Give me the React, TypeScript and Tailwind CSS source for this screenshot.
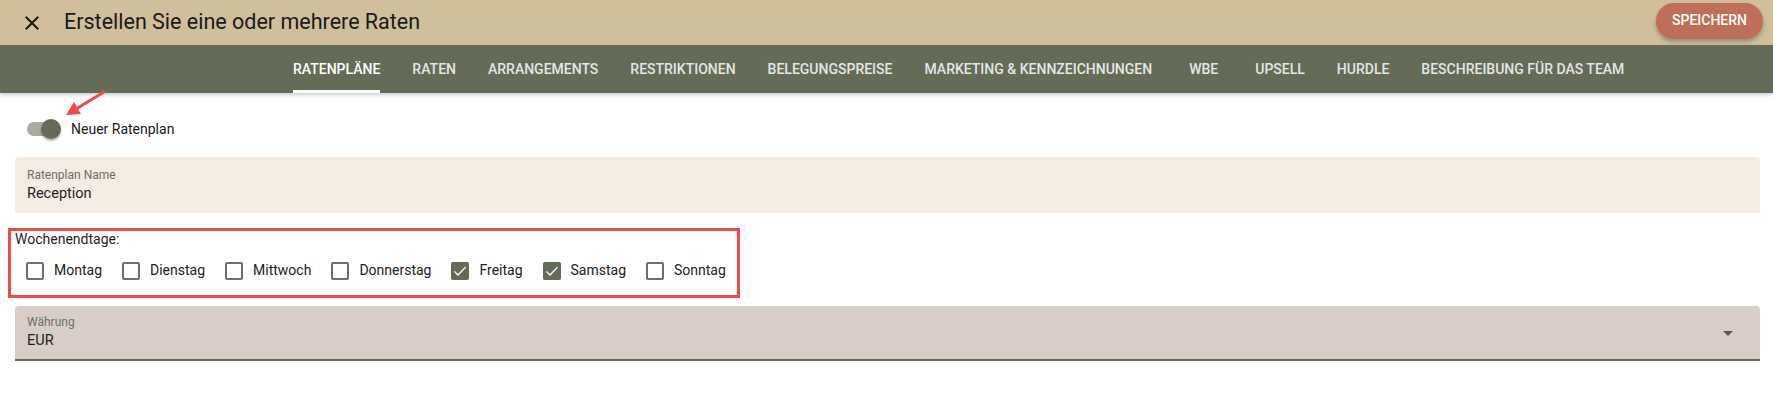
import { useState } from "react";

const TABS = [
  "Ratenpläne",
  "Raten",
  "Arrangements",
  "Restriktionen",
  "Belegungspreise",
  "Marketing & Kennzeichnungen",
  "WBE",
  "Upsell",
  "Hurdle",
  "Beschreibung für das Team",
];

const TAGE = [
  "Montag",
  "Dienstag",
  "Mittwoch",
  "Donnerstag",
  "Freitag",
  "Samstag",
  "Sonntag",
];

function Kontrollkaestchen({
  label,
  checked,
  onChange,
}: {
  label: string;
  checked: boolean;
  onChange: () => void;
}) {
  return (
    <label className="flex items-center cursor-pointer" onClick={onChange}>
      <span
        className={
          checked
            ? "flex h-[18px] w-[18px] items-center justify-center rounded-[2px] bg-[#646b56]"
            : "h-[18px] w-[18px] rounded-[2px] border-2 border-[#6e6e6e]"
        }
      >
        {checked && (
          <svg viewBox="0 0 24 24" className="h-[18px] w-[18px]">
            <path
              d="M4.5 12.5l4.8 4.8L19.5 6.8"
              fill="none"
              stroke="white"
              strokeWidth="1.8"
            />
          </svg>
        )}
      </span>
      <span className="ml-[10px] text-[14px] text-[#222]">{label}</span>
    </label>
  );
}

export default function App() {
  const [aktiv, setAktiv] = useState(true);
  const [tage, setTage] = useState<string[]>(["Freitag", "Samstag"]);

  const umschalten = (t: string) =>
    setTage((v) => (v.includes(t) ? v.filter((x) => x !== t) : [...v, t]));

  return (
    <div className="relative min-h-[403px] bg-white font-['Roboto',sans-serif]">
      {/* Kopfzeile */}
      <div className="flex h-[45px] items-center bg-[#d0bf9b] pl-[20px] pr-[10px]">
        <svg viewBox="0 0 24 24" className="h-[24px] w-[24px] fill-[#1a1a1a]">
          <path d="M19 6.41 17.59 5 12 10.59 6.41 5 5 6.41 10.59 12 5 17.59 6.41 19 12 13.41 17.59 19 19 17.59 13.41 12z" />
        </svg>
        <h1 className="ml-[20px] text-[21.5px] text-[#1a1a1a]">
          Erstellen Sie eine oder mehrere Raten
        </h1>
        <button className="mb-[4px] ml-auto h-[36px] rounded-full bg-[#bf6f57] px-[16px] text-[14px] font-medium text-white shadow-[0_3px_4px_rgba(0,0,0,0.25)]">
          SPEICHERN
        </button>
      </div>

      {/* Reiter */}
      <div className="relative z-10 flex h-[48px] gap-[32px] bg-[#646b56] pl-[293px] shadow-[0_2px_4px_rgba(0,0,0,0.2)]">
        {TABS.map((t, i) => (
          <div
            key={t}
            className={
              "relative flex h-full items-center text-[14px] font-medium uppercase " +
              (i === 0 ? "text-white" : "text-[#e4e6e6]") +
              (t === "WBE" ? " px-[5px]" : "")
            }
          >
            {t}
            {i === 0 && (
              <span className="absolute bottom-0 left-0 right-0 h-[3px] bg-white" />
            )}
          </div>
        ))}
      </div>

      {/* Pfeil-Markierung */}
      <svg
        viewBox="0 0 50 32"
        className="absolute left-[60px] top-[88px] z-20 h-[32px] w-[50px]"
      >
        <line
          x1="44"
          y1="4"
          x2="16"
          y2="21"
          stroke="#f2494a"
          strokeWidth="3"
          strokeLinecap="round"
        />
        <polygon points="6,27 21,26 14,14" fill="#f2494a" />
      </svg>

      <div className="pl-[15px] pr-[13px]">
        {/* Schalter */}
        <div className="mt-[17px] flex h-[38px] items-center pl-[12px]">
          <button
            onClick={() => setAktiv(!aktiv)}
            className="relative h-[14px] w-[31px] rounded-full bg-[#a9ac9f]"
          >
            <span
              className={
                "absolute top-[-3px] h-[20px] w-[20px] rounded-full bg-[#646b56] shadow-[0_2px_2px_rgba(0,0,0,0.3)] " +
                (aktiv ? "right-[-3px]" : "left-[-3px]")
              }
            />
          </button>
          <span className="ml-[13px] text-[14px] text-[#1a1a1a]">
            Neuer Ratenplan
          </span>
        </div>

        {/* Ratenplan Name */}
        <div className="mt-[9px] flex h-[56px] flex-col justify-center rounded-t-[4px] bg-[#f4ebe2] px-[12px]">
          <span className="text-[12px] leading-[14px] text-[#6b6b6b]">
            Ratenplan Name
          </span>
          <span className="mt-[3px] text-[14.5px] leading-[18px] text-[#1f1f1f]">
            Reception
          </span>
        </div>

        {/* Wochenendtage */}
        <div className="-ml-[7px] mt-[15px] w-fit border-[3px] border-[#f24a4a] pb-[14px] pl-[4px] pr-[11px]">
          <div className="text-[14px] leading-[16px] text-[#1f1f1f]">
            Wochenendtage:
          </div>
          <div className="ml-[11px] mt-[13px] flex gap-[20px]">
            {TAGE.map((t) => (
              <Kontrollkaestchen
                key={t}
                label={t}
                checked={tage.includes(t)}
                onChange={() => umschalten(t)}
              />
            ))}
          </div>
        </div>

        {/* Währung */}
        <div className="mt-[8px] flex h-[55px] items-center rounded-t-[4px] border-b-2 border-[#646b56] bg-[#d8cec7] pl-[12px] pr-[20px]">
          <div className="flex flex-col">
            <span className="text-[12px] leading-[14px] text-[#6e6f62]">
              Währung
            </span>
            <span className="mt-[3px] text-[14.5px] leading-[18px] text-[#1f1f1f]">
              EUR
            </span>
          </div>
          <svg viewBox="0 0 24 24" className="ml-auto h-[24px] w-[24px] fill-[#5a5a5a]">
            <path d="M7 10l5 5 5-5z" />
          </svg>
        </div>
      </div>
    </div>
  );
}
